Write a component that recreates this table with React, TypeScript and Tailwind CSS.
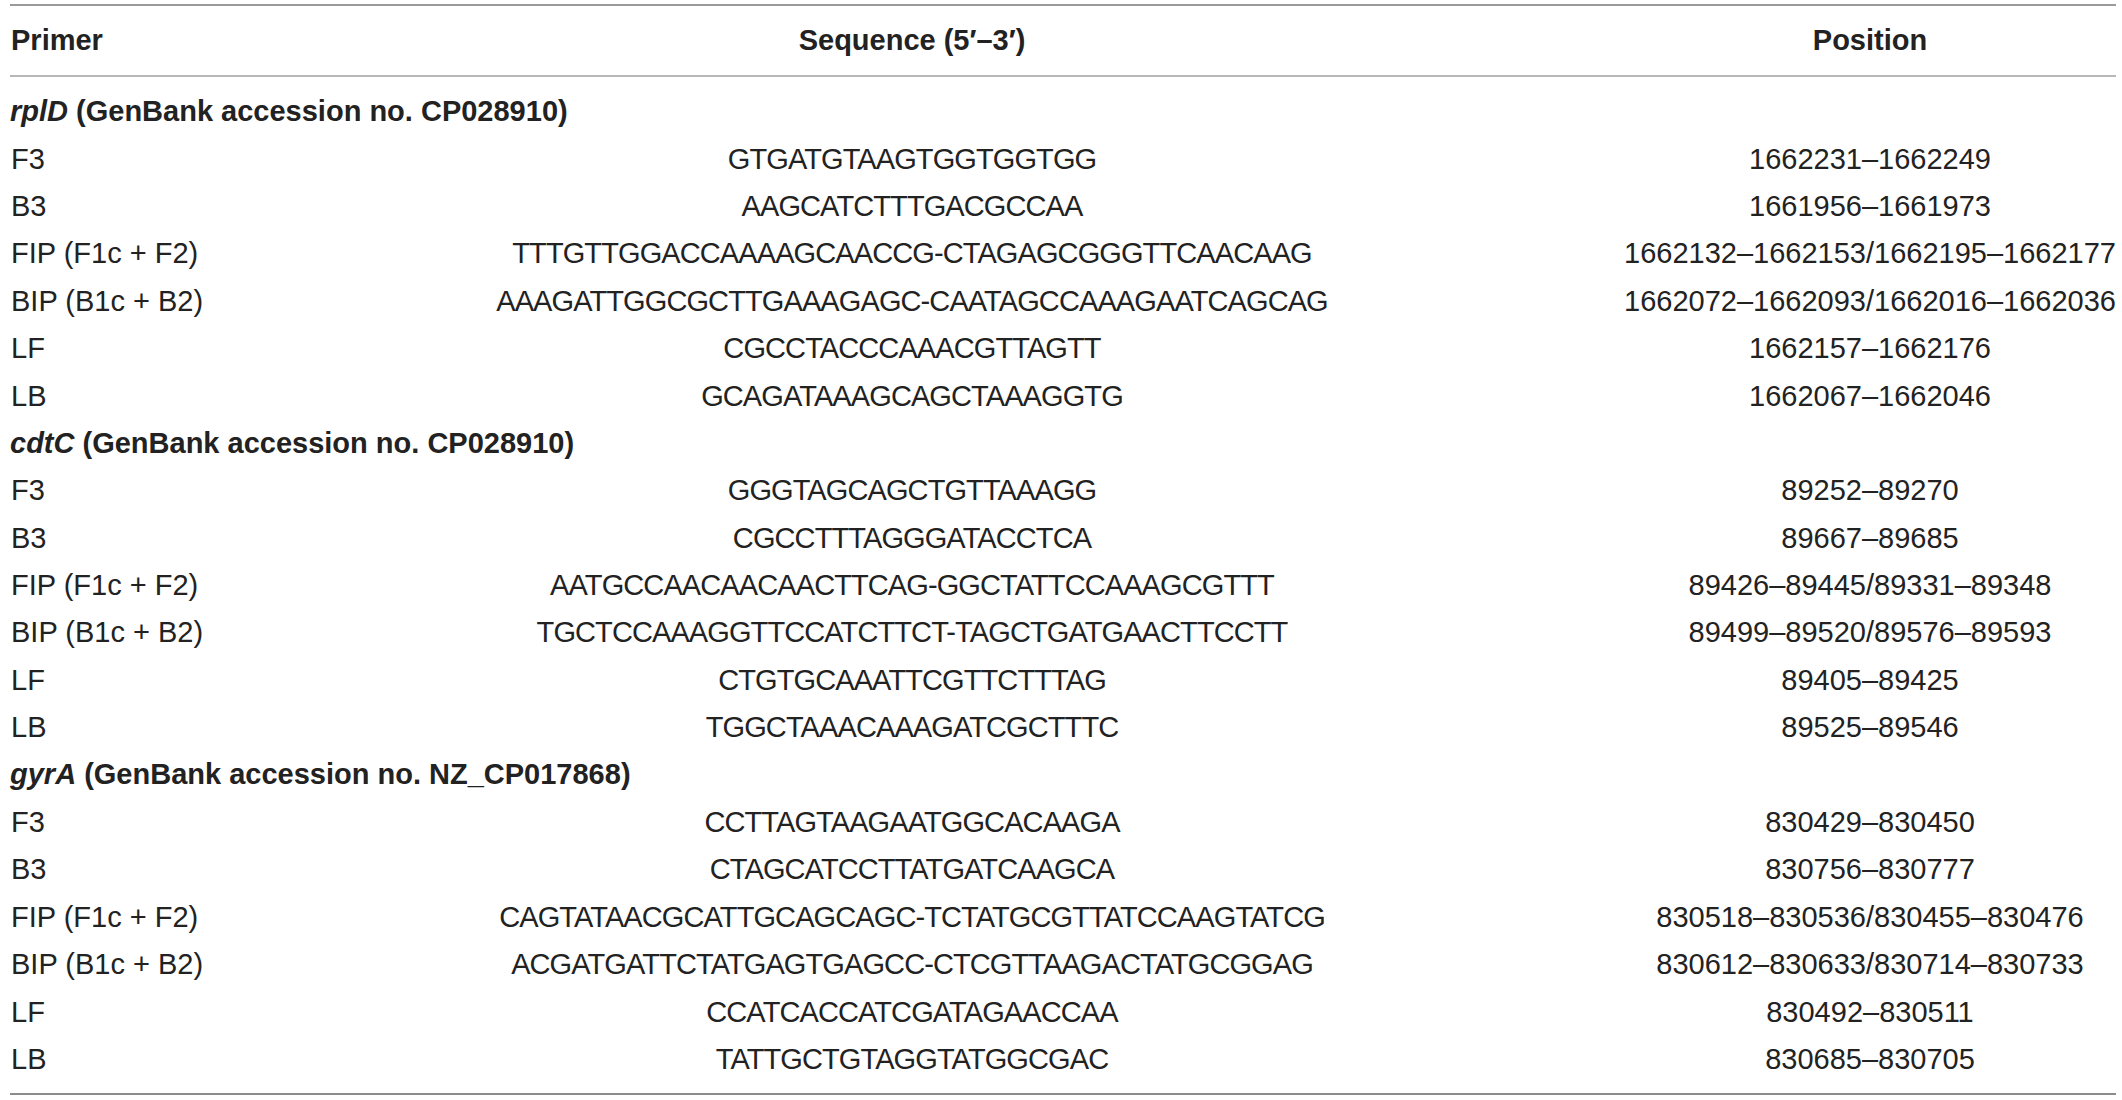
const groups = [
  {
    gene: 'rplD',
    acc: 'CP028910',
    rows: [
      ['F3', 'GTGATGTAAGTGGTGGTGG', '1662231–1662249'],
      ['B3', 'AAGCATCTTTGACGCCAA', '1661956–1661973'],
      ['FIP (F1c + F2)', 'TTTGTTGGACCAAAAGCAACCG-CTAGAGCGGGTTCAACAAG', '1662132–1662153/1662195–1662177'],
      ['BIP (B1c + B2)', 'AAAGATTGGCGCTTGAAAGAGC-CAATAGCCAAAGAATCAGCAG', '1662072–1662093/1662016–1662036'],
      ['LF', 'CGCCTACCCAAACGTTAGTT', '1662157–1662176'],
      ['LB', 'GCAGATAAAGCAGCTAAAGGTG', '1662067–1662046'],
    ],
  },
  {
    gene: 'cdtC',
    acc: 'CP028910',
    rows: [
      ['F3', 'GGGTAGCAGCTGTTAAAGG', '89252–89270'],
      ['B3', 'CGCCTTTAGGGATACCTCA', '89667–89685'],
      ['FIP (F1c + F2)', 'AATGCCAACAACAACTTCAG-GGCTATTCCAAAGCGTTT', '89426–89445/89331–89348'],
      ['BIP (B1c + B2)', 'TGCTCCAAAGGTTCCATCTTCT-TAGCTGATGAACTTCCTT', '89499–89520/89576–89593'],
      ['LF', 'CTGTGCAAATTCGTTCTTTAG', '89405–89425'],
      ['LB', 'TGGCTAAACAAAGATCGCTTTC', '89525–89546'],
    ],
  },
  {
    gene: 'gyrA',
    acc: 'NZ_CP017868',
    rows: [
      ['F3', 'CCTTAGTAAGAATGGCACAAGA', '830429–830450'],
      ['B3', 'CTAGCATCCTTATGATCAAGCA', '830756–830777'],
      ['FIP (F1c + F2)', 'CAGTATAACGCATTGCAGCAGC-TCTATGCGTTATCCAAGTATCG', '830518–830536/830455–830476'],
      ['BIP (B1c + B2)', 'ACGATGATTCTATGAGTGAGCC-CTCGTTAAGACTATGCGGAG', '830612–830633/830714–830733'],
      ['LF', 'CCATCACCATCGATAGAACCAA', '830492–830511'],
      ['LB', 'TATTGCTGTAGGTATGGCGAC', '830685–830705'],
    ],
  },
];

const cols = 'grid grid-cols-[470px_864px_1fr_492px] items-center';

export default function App() {
  return (
    <div className="min-h-screen bg-white pl-[10px] pr-[6px] pt-[4px] font-['Liberation_Sans',Arial,sans-serif] text-[29px] text-[#222]">
      {/* header */}
      <div className={`${cols} h-[73px] border-y-2 border-t-[#9a9a9a] border-b-[#b8b8b8] font-bold`}>
        <div className="pl-px">Primer</div>
        <div className="text-center">Sequence (5′–3′)</div>
        <div />
        <div className="text-center">Position</div>
      </div>

      {/* body */}
      <div className="border-b-2 border-[#8c8c8c] pb-[10px] pt-[11px]">
        {groups.map((g) => (
          <div key={g.gene}>
            <div className="flex h-[47.4px] items-center font-bold">
              <span className="italic">{g.gene}</span>
              <span>&nbsp;(GenBank accession no. {g.acc})</span>
            </div>
            {g.rows.map(([primer, seq, pos]) => (
              <div key={g.gene + primer} className={`${cols} h-[47.4px] leading-none`}>
                <div className="pl-px">{primer}</div>
                <div className="text-center tracking-[-0.9px]">{seq}</div>
                <div />
                <div className="text-center">{pos}</div>
              </div>
            ))}
          </div>
        ))}
      </div>
    </div>
  );
}
